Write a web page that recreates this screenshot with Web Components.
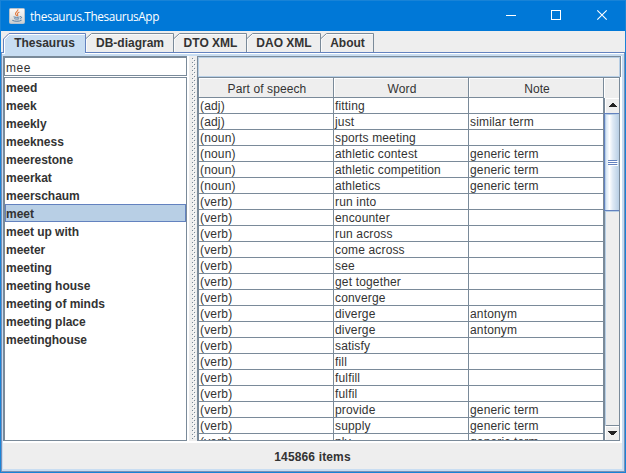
<!DOCTYPE html>
<html lang="en"><head><meta charset="utf-8"><title>thesaurus.ThesaurusApp</title>
<style>html,body{margin:0;width:626px;height:473px;overflow:hidden;font:12px "Liberation Sans",Arial,sans-serif;color:#333}</style></head>
<body><thesaurus-app></thesaurus-app>
<script>
const define=(name,html,setup)=>customElements.define(name,class extends HTMLElement{
  connectedCallback(){
    if(this.shadowRoot)return;
    const t=document.createElement('template');
    t.innerHTML='<style>*{box-sizing:border-box}:host{box-sizing:border-box;display:block}</style>'+html;
    this.attachShadow({mode:'open'}).append(t.content.cloneNode(true));
    if(setup)setup.call(this,this.shadowRoot);
  }
});

define('title-bar',`<style>
:host{display:flex;height:31px;background:#0078d7;border-top:1px solid #1883d7;border-left:1px solid #1883d7;border-right:1px solid #1883d7;color:#fff;align-items:center;padding-left:8px}
.t{font:11.8px/16px "Open Sans","Noto Sans",sans-serif;margin-left:5px;flex:1;white-space:nowrap;letter-spacing:-.39px}
svg{display:block;flex:none}
.c{width:45px}
</style>
<svg width="16" height="16" viewBox="0 0 16 16"><defs><linearGradient id="g" x2="0" y2="1"><stop stop-color="#fafafa"/><stop offset=".5" stop-color="#e9e9e7"/><stop offset="1" stop-color="#c9cdd0"/></linearGradient></defs>
<rect x=".5" y=".5" width="15" height="15" rx="1" fill="url(#g)" stroke="#b5c1cc"/>
<path d="M8.9 1.4C9.5 3.2 6.2 4 6.5 5.8c.1.9.8 1.3 1.1 2.1M10.4 4.1C8.8 4.8 7.9 5.6 8.7 6.7c.4.6.1 1-.4 1.4" fill="none" stroke="#e0783c" stroke-width="1.1"/>
<path d="M4.6 8.8c1.5.7 4.4.7 6 .1M5.3 10.6c1.4.6 3.5.6 4.9.1M3.3 12.3c2.1 1.3 7 1.3 9.3-.1M11 8.7c2.2-.4 2 1.6.2 2.1" fill="none" stroke="#577fa5" stroke-width="1"/></svg>
<span class="t"><slot></slot></span>
<svg class="c" height="30" viewBox="0 0 45 30" shape-rendering="crispEdges"><path d="M16 14.5h10" stroke="#fff"/></svg>
<svg class="c" height="30" viewBox="0 0 45 30" shape-rendering="crispEdges"><path d="M16.5 9.500h9v9h-9z" fill="none" stroke="#fff"/></svg>
<svg class="c" height="30" viewBox="0 0 45 30"><path d="M17.3 9.3l9.4 9.4M26.700 9.3L17.300 18.700" stroke="#fff" stroke-width="1.1"/></svg>`);

define('metal-tab',`<style>
:host{position:relative;height:20px;text-align:center;font-weight:bold;line-height:21px;white-space:nowrap;width:var(--w)}
:host([selected]){z-index:1}
svg{position:absolute;left:0;top:0}
span{position:relative}
</style><svg></svg><span><slot></slot></span>`,function(r){
  const w=+this.getAttribute('w'),s=this.hasAttribute('selected'),svg=r.querySelector('svg');
  this.style.setProperty('--w',w+'px');
  svg.setAttribute('width',w+1);svg.setAttribute('height',21);
  svg.innerHTML=s
   ?`<path d="M2 21V6L6 2H${w-1}V21z" fill="#c8ddf2"/><path d="M.5 19V6L6 .5H${w-.5}V20" fill="none" stroke="#6382bf"/><path d="M1.500 21V6.500L6.500 1.500H${w-1}" fill="none" stroke="#fff"/>`
   :`<path d="M0 5.500L5.500 .5H${w-.5}V19" fill="none" stroke="#7a8a99"/><path d="M.5 19V6.500L5.500 1.500H${w-1}" fill="none" stroke="#fff" opacity=".7"/>`;
});

define('tab-strip',`<style>
:host{display:flex;height:22px;padding:2px 0 0 2px;background:#eee;border-bottom:1px solid #6382bf;margin:0 1px;position:relative;z-index:1}
</style><slot></slot>`);

define('word-list',`<style>
:host{width:184px;flex:none;display:flex;flex-direction:column;border-left:1px solid #7a8a99}
.f{height:20px;border:1px solid #7a8a99;border-top-width:2px;background:#fff;padding:2px 1px 0;line-height:17px;letter-spacing:.5px}
.l{flex:1;border:1px solid #7a8a99;margin-top:1px;background:#fff;font-weight:bold;letter-spacing:-.03px}
.i{height:18px;padding-top:1px;border:1px solid transparent;line-height:17px}
.s{background:#b8cfe5;border-color:#6382bf}
</style><div class="f">mee</div><div class="l"></div>`,function(r){
  const l=r.querySelector('.l');
  for(const w of ['meed','meek','meekly','meekness','meerestone','meerkat','meerschaum','meet','meet up with','meeter','meeting','meeting house','meeting of minds','meeting place','meetinghouse']){
    const e=document.createElement('div');e.className='i'+(w==='meet'?' s':'');e.textContent=w;l.append(e);
  }
});

define('split-bar',`<style>:host{width:8px;margin-left:2px;flex:none;background:#eee;padding:2px 0 2px 3px}svg{display:block}</style>
<svg width="4" height="381" shape-rendering="crispEdges"><defs><pattern id="p" width="4" height="4" patternUnits="userSpaceOnUse"><path d="M0 0h1v1H0zM2 2h1v1H2z" fill="#7a8a99"/><path d="M1 1h1v1H1zM3 3h1v1H3z" fill="#fff"/></pattern></defs><rect width="4" height="381" fill="url(#p)"/></svg>`);

define('scroll-bar',`<style>
:host{width:16px;flex:none;display:flex;flex-direction:column;background:#eee;border-right:1px solid #7a8a99;border-left:1px solid #7a8a99}
.b{height:15px;display:grid;place-items:center;border-left:1px solid #fff;border-top:1px solid #fff}
.t{height:98px;border:1px solid #6382bf;border-right:0;margin-left:-1px;background:linear-gradient(90deg,#c8ddf2 0,#fff 32%,#dfeaf5 55%,#b8cfe5);box-shadow:inset 1px 1px #b8cfe5;display:grid;place-items:center}
.k{flex:1;box-shadow:inset 1px 1px #b8cfe5}
.d{border-top:1px solid #7a8a99;box-shadow:inset 0 1px #fff}
svg{display:block}
.u svg{margin-top:-2px}
.t svg{margin:2px 0 0 1px}
</style><div class="b u"><svg width="8" height="4" shape-rendering="crispEdges"><path d="M3 0h2v1h1v1h1v1h1v1H0V3h1V2h1V1h1z" fill="#222"/></svg></div>
<div class="t"><svg width="10" height="6" shape-rendering="crispEdges"><path d="M0 0h9v1H0zM0 2h9v1H0zM0 4h9v1H0z" fill="#6382bf"/><path d="M1 1h9v1H1zM1 3h9v1H1zM1 5h9v1H1z" fill="#fff"/></svg></div>
<div class="k"></div><div class="b d"><svg width="9" height="4" shape-rendering="crispEdges"><path d="M0 0h9v1H8v1H7v1H6v1H3V3H2V2H1V1H0z" fill="#222"/></svg></div>`);

define('word-table',`<style>
:host{flex:1;display:flex;flex-direction:column;border:1px solid #7a8a99;border-left-width:2px;border-right:0;min-height:0;margin-right:1px}
.h,.r{display:grid;grid-template-columns:135px 135px 135px}
.h{height:20px;background:#eee;grid-template-columns:135px 135px 135px 1fr;border-right:1px solid #7a8a99}
.h div{height:20px;border-right:1px solid #7a8a99;border-bottom:1px solid #7a8a99;text-align:center;line-height:18px;padding:2px 0 0 2px;box-shadow:inset 1px 1px #fff;letter-spacing:.1px}
.h div:last-child{border:0}
.m{flex:1;display:flex;min-height:0}
.b{width:405px;overflow:hidden;background:#fff}
.r div{height:16px;border-right:1px solid #7a8a99;border-bottom:1px solid #7a8a99;line-height:16px;padding-left:1px;white-space:nowrap;letter-spacing:.16px}
</style><div class="h"><div>Part of speech</div><div>Word</div><div>Note</div><div></div></div><div class="m"><div class="b"></div><scroll-bar></scroll-bar></div>`,function(r){
  const b=r.querySelector('.b');
  const rows=['adj|fitting|','adj|just|similar term','noun|sports meeting|','noun|athletic contest|generic term','noun|athletic competition|generic term','noun|athletics|generic term',...['run into','encounter','run across','come across','see','get together','converge','diverge|antonym','diverge|antonym','satisfy','fill','fulfill','fulfil','provide|generic term','supply|generic term','ply|generic term'].map(x=>'verb|'+x)];
  for(const x of rows){const [p,w,n='']=x.split('|');const e=document.createElement('div');e.className='r';
    for(const v of [`(${p})`,w,n]){const c=document.createElement('div');c.textContent=v;e.append(c)}b.append(e)}
});

define('result-pane',`<style>
:host{flex:1;display:flex;flex-direction:column;min-width:0}
.n{height:21px;border:1px solid #7a8a99;background:#eee;box-shadow:inset 0 0 0 1px #b8cfe5;border-bottom:0}
</style><div class="n"></div><word-table></word-table>`);

define('status-bar',`<style>:host{height:26px;line-height:28px;text-align:center;font-weight:bold;background:#eee;letter-spacing:.14px}</style><slot></slot>`);

define('thesaurus-app',`<style>
:host{width:626px;height:473px;display:flex;flex-direction:column;background:#1883d7}
.p{flex:1;display:flex;flex-direction:column;margin:0 1px 1px;border:1px solid #7a8fb5;border-top:0;min-height:0;padding-top:1px;background:#fff}
.q{flex:1;display:flex;flex-direction:column;border:solid #c8ddf2;border-width:2px 2px 2px 1px;min-height:0}
.s{height:387px;flex:none;display:flex;background:#fff;padding:0 1px 2px 0}
</style>
<title-bar>thesaurus.ThesaurusApp</title-bar>
<tab-strip><metal-tab selected w="83">Thesaurus</metal-tab><metal-tab w="88">DB-diagram</metal-tab><metal-tab w="73">DTO XML</metal-tab><metal-tab w="74">DAO XML</metal-tab><metal-tab w="53">About</metal-tab></tab-strip>
<div class="p"><div class="q"><div class="s"><word-list></word-list><split-bar></split-bar><result-pane></result-pane></div><status-bar>145866 items</status-bar></div></div>`);
</script></body></html>
